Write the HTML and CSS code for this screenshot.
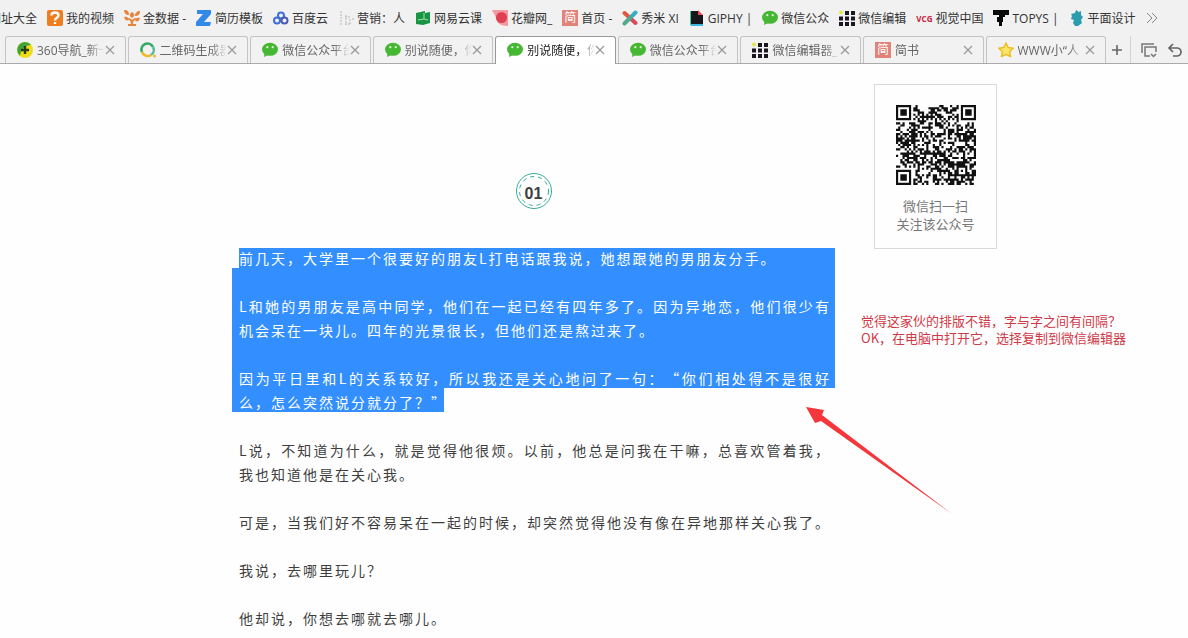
FILE: index.html
```html
<!doctype html>
<html lang="zh-CN">
    <head>
        <meta charset="UTF-8" />
        <meta name="viewport" content="width=device-width, initial-scale=1.0" />
        <title>别说随便，你</title>
        <link rel="stylesheet" href="styles.css">
    </head>
    <body>
        <svg class="sprite" aria-hidden="true">
            <symbol id="wechat" viewBox="0 0 16 16">
                <ellipse cx="8" cy="7.3" rx="8" ry="6.5" fill="#46b733" />
                <path d="M2.5 11 2 15l4-2z" fill="#46b733" />
                <circle cx="5.3" cy="5.2" r="1.1" fill="#e4f7dc" />
                <circle cx="10.7" cy="5.2" r="1.1" fill="#e4f7dc" />
            </symbol>
            <symbol id="grid" viewBox="0 0 16 16">
                <path d="M6 1h4v4H6zM12 1h4v4h-4zM0 6.500h4v4H0zM6 6.500h4v4H6zM12 6.500h4v4h-4zM0 12h4v4H0zM6 12h4v4H6zM12 12h4v4h-4z" fill="#1b1720" />
                <circle cx="2" cy="2.500" r="2" fill="#e3e84a" />
            </symbol>
            <symbol id="close" viewBox="0 0 10 10">
                <path d="M1 1l8 8M9 1l-8 8" fill="none" stroke="#999" stroke-width="1.2" />
            </symbol>
        </svg>

        <header>
            <nav class="bookmarks">
                <a href="#" class="first">网址大全</a>
                <a href="#">
                    <svg viewBox="0 0 16 16"><rect width="16" height="16" rx="2" fill="#ee7d1d" /><path d="M4.500 5.500C4.500 1.500 11.500 1.500 11.500 5.500 11.500 8 8 7.500 8 10.500M8 12v2" fill="none" stroke="#fff" stroke-width="2.400" /></svg>
                    我的视频
                </a>
                <a href="#">
                    <svg viewBox="0 0 16 16"><g fill="#e8853d"><path d="M7 15c0-4-1-5-4-6l1-1c2 0 3 1 4 2 1-1 2-2 4-2l1 1c-3 1-4 2-4 6z" /><path d="M0 0c4 0 5 2 5 5C2 5 0 3 0 0zM8 2c3 2 3 4 0 6-3-2-3-4 0-6zM16 1c0 4-2 5-5 5 0-3 2-5 5-5zM0 7c3-1 4 0 5 3-3 1-4 0-5-3zM16 8c-3-1-4 0-5 3 3 1 4 0 5-3z" /><path d="M4 14h8v2H4z" /></g></svg>
                    金数据 -
                </a>
                <a href="#">
                    <svg viewBox="0 0 16 16"><path d="M1 0h14v4L8 12h7l-1 4H0v-4l7-8H1z" fill="#3289e8" /></svg>
                    简历模板
                </a>
                <a href="#">
                    <svg viewBox="0 0 16 16"><g fill="none" stroke-width="2"><circle cx="8" cy="5.500" r="3" stroke="#3c6fd8" /><circle cx="4" cy="10.500" r="3" stroke="#3c6fd8" /><circle cx="11.500" cy="10.500" r="3" stroke="#4c58b4" /></g></svg>
                    百度云
                </a>
                <a href="#">
                    <svg viewBox="0 0 16 16"><path d="M3 1v14M7 7h5M8 5v10M12 9v5M7 14h6M15 8v2" fill="none" stroke="#b8b8b8" stroke-dasharray="2 1" /></svg>
                    营销：人
                </a>
                <a href="#">
                    <svg viewBox="0 0 16 16"><path d="M1 3l9-2v2l5-1v11l-7 2-7-1z" fill="#169642" /><path d="M3 10l6-1 4 1M9 3v6" fill="none" stroke="#a5dcb0" /></svg>
                    网易云课
                </a>
                <a href="#">
                    <svg viewBox="0 0 16 16"><path d="M0 0h16v16C8 16 5 13 4 8 3 4 1 3 0 0z" fill="#f29a9f" /><circle cx="9.500" cy="7.500" r="5.500" fill="#df4053" /></svg>
                    花瓣网_
                </a>
                <a href="#"><span class="jian">简</span>首页 -</a>
                <a href="#">
                    <svg viewBox="0 0 16 16"><g fill="none" stroke-width="4" stroke-linecap="round"><path d="M2.500 3l5.500 5" stroke="#e3553c" /><path d="M8 8l5.500 5" stroke="#d9495c" /><path d="M13.500 2.500L8 8" stroke="#36afc0" /><path d="M8 8l-5.500 5.500" stroke="#55a98c" /></g></svg>
                    秀米 XI
                </a>
                <a href="#">
                    <svg viewBox="0 0 16 16"><path d="M2 1h8v4h4v10H2z" fill="#18151d" /><path d="M9 0l5 5h-5z" fill="#f04b58" /><path d="M1 1h1v14H1z" fill="#32ce8b" /><path d="M2 14h12v2H2z" fill="#3db9df" /></svg>
                    GIPHY |
                </a>
                <a href="#"><svg><use href="#wechat" /></svg>微信公众</a>
                <a href="#"><svg><use href="#grid" /></svg>微信编辑</a>
                <a href="#"><b class="vcg">VCG</b>视觉中国</a>
                <a href="#">
                    <svg viewBox="0 0 16 16"><path d="M0 0h16v5h-4v2h-2v5H9v4H6v-4H4V7h2V5H0z" fill="#090909" /></svg>
                    TOPYS |
                </a>
                <a href="#">
                    <svg viewBox="0 0 16 16"><path d="M7 0l3 2 2-1v4l2 2-2 3 1 3-4 3H6l-2-3 1-3-3-1 1-3-1-2 4-1z" fill="#2b9cae" /></svg>
                    平面设计
                </a>
                <button class="more" aria-label="更多书签">
                    <svg viewBox="0 0 12 12"><path d="M1 1l5 5-5 5M6 1l5 5-5 5" fill="none" stroke="#888" /></svg>
                </button>
            </nav>

            <div class="tabbar">
                <div class="tabs">
                    <div class="tab">
                        <svg class="icon" viewBox="0 0 16 16"><circle cx="8" cy="8" r="8" fill="#f0dc19" /><path d="M8 0a8 8 0 0 0-5 14C4 6 10 3 14 3A8 8 0 0 0 8 0z" fill="#3fa53a" /><path d="M8 4v8M4 8h8" stroke="#243c16" stroke-width="2.400" /></svg>
                        <span>360导航_新一</span>
                        <button aria-label="关闭"><svg><use href="#close" /></svg></button>
                    </div>
                    <div class="tab">
                        <svg class="icon" viewBox="0 0 16 16"><g fill="none" stroke-width="2.600"><path d="M2 10A6 6 0 0 1 13 5" stroke="#35aa65" /><path d="M13 5a6 6 0 0 1-2 8" stroke="#54bd9e" /><path d="M11 13a6 6 0 0 1-9-3" stroke="#efb92f" /></g><circle cx="14.500" cy="14" r="1.500" fill="#efb92f" /></svg>
                        <span>二维码生成器</span>
                        <button aria-label="关闭"><svg><use href="#close" /></svg></button>
                    </div>
                    <div class="tab">
                        <svg class="icon"><use href="#wechat" /></svg>
                        <span>微信公众平台</span>
                        <button aria-label="关闭"><svg><use href="#close" /></svg></button>
                    </div>
                    <div class="tab">
                        <svg class="icon"><use href="#wechat" /></svg>
                        <span>别说随便，你</span>
                        <button aria-label="关闭"><svg><use href="#close" /></svg></button>
                    </div>
                    <div class="tab active">
                        <svg class="icon"><use href="#wechat" /></svg>
                        <span>别说随便，你</span>
                        <button aria-label="关闭"><svg><use href="#close" /></svg></button>
                    </div>
                    <div class="tab">
                        <svg class="icon"><use href="#wechat" /></svg>
                        <span>微信公众平台</span>
                        <button aria-label="关闭"><svg><use href="#close" /></svg></button>
                    </div>
                    <div class="tab">
                        <svg class="icon"><use href="#grid" /></svg>
                        <span>微信编辑器_</span>
                        <button aria-label="关闭"><svg><use href="#close" /></svg></button>
                    </div>
                    <div class="tab">
                        <b class="jian">简</b>
                        <span>简书</span>
                        <button aria-label="关闭"><svg><use href="#close" /></svg></button>
                    </div>
                    <div class="tab">
                        <svg class="icon" viewBox="0 0 16 16"><path d="M8 1l2.200 4.500 5 .7-3.600 3.500.9 5L8 12.300l-4.500 2.400.9-5L.8 6.200l5-.7z" fill="#fae56b" stroke="#edbd20" stroke-width="1.500" stroke-linejoin="round" /></svg>
                        <span>WWW小“人</span>
                        <button aria-label="关闭"><svg><use href="#close" /></svg></button>
                    </div>
                </div>
                <div class="tools">
                    <button class="add" aria-label="新建标签页">
                        <svg viewBox="0 0 16 16"><path d="M8 3v10M3 8h10" stroke="#666" stroke-width="1.600" /></svg>
                    </button>
                    <button aria-label="标签列表">
                        <svg viewBox="0 0 16 16"><path d="M1 11V2h12M9 14H4V5h11v5M10 12l2.500 2.500L15 12" fill="none" stroke="#777" stroke-width="1.500" /></svg>
                    </button>
                    <button aria-label="恢复标签页">
                        <svg viewBox="0 0 16 16"><path d="M6 2L2 6l4 4M2 6h8a4 4 0 0 1 0 8H6" fill="none" stroke="#666" stroke-width="1.700" /></svg>
                    </button>
                </div>
            </div>
        </header>

        <main>
            <article>
                <div class="number">
                    <svg viewBox="0 0 36 36"><circle cx="18" cy="18" r="17.500" /><circle cx="18" cy="18" r="14.500" stroke-dasharray="4 4" /></svg>
                    <h2>01</h2>
                </div>
                <div class="selected">
                    <p>前几天，大学里一个很要好的朋友L打电话跟我说，她想跟她的男朋友分手。</p>
                    <p>L和她的男朋友是高中同学，他们在一起已经有四年多了。因为异地恋，他们很少有机会呆在一块儿。四年的光景很长，但他们还是熬过来了。</p>
                    <p>因为平日里和L的关系较好，所以我还是关心地问了一句：“你们相处得不是很好么，怎么突然说分就分了？”</p>
                </div>
                <p>L说，不知道为什么，就是觉得他很烦。以前，他总是问我在干嘛，总喜欢管着我，我也知道他是在关心我。</p>
                <p>可是，当我们好不容易呆在一起的时候，却突然觉得他没有像在异地那样关心我了。</p>
                <p>我说，去哪里玩儿？</p>
                <p>他却说，你想去哪就去哪儿。</p>
            </article>
            <aside>
                <div class="card">
                    <svg id="qr" viewBox="0 0 37 37" role="img" aria-label="二维码"></svg>
                    <p>微信扫一扫<br />关注该公众号</p>
                </div>
                <p class="note">觉得这家伙的排版不错，字与字之间有间隔？<br />OK，在电脑中打开它，选择复制到微信编辑器</p>
                <svg class="arrow" viewBox="0 0 146 107" aria-hidden="true">
                    <path d="M0 0l18 3-2 5 130 99L15 14l-6 2z" fill="#f5363a" />
                </svg>
            </aside>
        </main>

        <script src="qr.js"></script>
    </body>
</html>
```
FILE: styles.css
```css
* {
    box-sizing: border-box;
}
body {
    margin: 0;
    background: #fefefe;
    color: #3e3e3e;
    font-family: "Noto Sans CJK SC", "Noto Sans", sans-serif;
    font-size: 12px;
}
p,
h2 {
    margin: 0;
}
button {
    display: flex;
    padding: 0;
    border: none;
    background: none;
    cursor: pointer;
}
.sprite {
    position: absolute;
    width: 0;
    height: 0;
}

/* browser chrome */
header {
    background: #f1f1f1;
    font-family: "Open Sans", "Noto Sans CJK SC", sans-serif;
    overflow: hidden;
}
.bookmarks {
    display: flex;
    align-items: center;
    gap: 10px;
    height: 36px;
    white-space: nowrap;
}
.bookmarks a {
    display: flex;
    flex: none;
    align-items: center;
    gap: 3px;
    color: #333;
    text-decoration: none;
}
.bookmarks .first {
    margin-left: -11px;
}
.bookmarks a svg {
    flex: none;
    width: 16px;
    height: 16px;
}
.jian {
    flex: none;
    width: 16px;
    height: 16px;
    background: #e18379;
    color: #fff;
    font-size: 12px;
    font-weight: normal;
    line-height: 16px;
    text-align: center;
}
.vcg {
    color: #c3273d;
    font-size: 8px;
}
.more svg {
    width: 12px;
    height: 12px;
}
.tabbar {
    display: flex;
    height: 28px;
    padding-left: 5px;
    border-bottom: 1px solid #aaa;
}
.tabs {
    display: flex;
    flex: 1;
    gap: 2px;
    min-width: 0;
}
.tab {
    display: flex;
    flex: 1;
    align-items: center;
    gap: 4px;
    min-width: 0;
    padding: 0 10px 0 11px;
    border: 1px solid #c4c4c4;
    border-bottom: none;
    border-radius: 3px 3px 0 0;
    background: #f2f2f2;
    color: #666;
}
.tab.active {
    height: 28px;
    padding-bottom: 1px;
    border-color: #999;
    background: #fff;
    color: #222;
}
.tab .icon {
    flex: none;
    width: 16px;
    height: 16px;
}
.tab span {
    flex: 1;
    margin-right: -4px;
    overflow: hidden;
    white-space: nowrap;
    mask-image: linear-gradient(to right, #000 75%, transparent);
}
.tab button svg {
    width: 10px;
    height: 10px;
}
.tools {
    display: flex;
    flex: none;
    align-items: center;
    gap: 10px;
    padding-right: 5px;
}
.tools svg {
    width: 16px;
    height: 16px;
}
.tools .add {
    align-items: center;
    height: 27px;
    padding: 0 5px 0 3px;
    border-right: 1px solid #d2d2d2;
}

/* article page */
main {
    display: flex;
    align-items: flex-start;
    gap: 26px;
    padding-left: 232px;
}
article {
    flex: none;
    width: 603px;
    padding-top: 109px;
}
article p {
    margin-bottom: 24px;
    padding: 0 4px 0 7px;
    font-size: 14px;
    line-height: 24px;
    letter-spacing: 2px;
    text-align: justify;
    text-spacing-trim: space-all;
}
article p:last-child {
    margin-bottom: 0;
}
.number {
    display: grid;
    place-items: center;
    width: 36px;
    margin: 0 auto 37px;
}
.number svg,
.number h2 {
    grid-area: 1 / 1;
}
.number svg {
    width: 36px;
    height: 36px;
    fill: none;
    stroke: #35aa9c;
}
.number h2 {
    padding-top: 6px;
    font-family: "Liberation Sans", sans-serif;
    font-size: 16px;
}
.selected {
    margin-bottom: 24px;
    background: #338fff;
    color: #fff;
    clip-path: polygon(7px 2px, 100% 2px, 100% 142px, 212px 142px, 212px 166px, 0 166px, 0 22px, 7px 22px);
}
aside {
    position: relative;
    padding-top: 20px;
}
.card {
    width: 123px;
    height: 165px;
    margin-left: 13px;
    padding-top: 20px;
    border: 1px solid #d9dadc;
    color: #777;
    font-size: 13px;
    line-height: 18px;
    text-align: center;
}
.card svg {
    display: block;
    width: 80px;
    height: 80px;
    margin: 0 auto 12px;
}
.note {
    margin-top: 63px;
    color: #d03a48;
    font-size: 13px;
    line-height: 17px;
    text-spacing-trim: space-all;
}
.arrow {
    position: absolute;
    top: 343px;
    left: -55px;
    width: 146px;
    height: 107px;
}
```
FILE: qr.js
```js
const size = 37;
const qr = document.getElementById("qr");
let seed = 73;
let path = "";

function random() {
    seed = (seed * 16807) % 2147483647;
    return seed / 2147483647;
}

// square rings: dark, light, dark from the centre out
function ring(x, y, cx, cy, radius) {
    const d = Math.max(Math.abs(x - cx), Math.abs(y - cy));
    if (d > radius + 1) return null;
    return radius === 3 ? d === 3 || d < 2 : d === 2 || d === 0;
}

for (let y = 0; y < size; y++) {
    for (let x = 0; x < size; x++) {
        let dark = random() < 0.52;
        if (x === 6) dark = y % 2 === 0;
        if (y === 6) dark = x % 2 === 0;
        const marks = [
            ring(x, y, 3, 3, 3),
            ring(x, y, size - 4, 3, 3),
            ring(x, y, 3, size - 4, 3),
            Math.max(Math.abs(x - 30), Math.abs(y - 30)) < 3 ? ring(x, y, 30, 30, 2) : null,
        ];
        for (const mark of marks) {
            if (mark !== null) dark = mark;
        }
        if (dark) path += `M${x} ${y}h1v1h-1z`;
    }
}

qr.innerHTML = `<path d="${path}" fill="#111" />`;
```
